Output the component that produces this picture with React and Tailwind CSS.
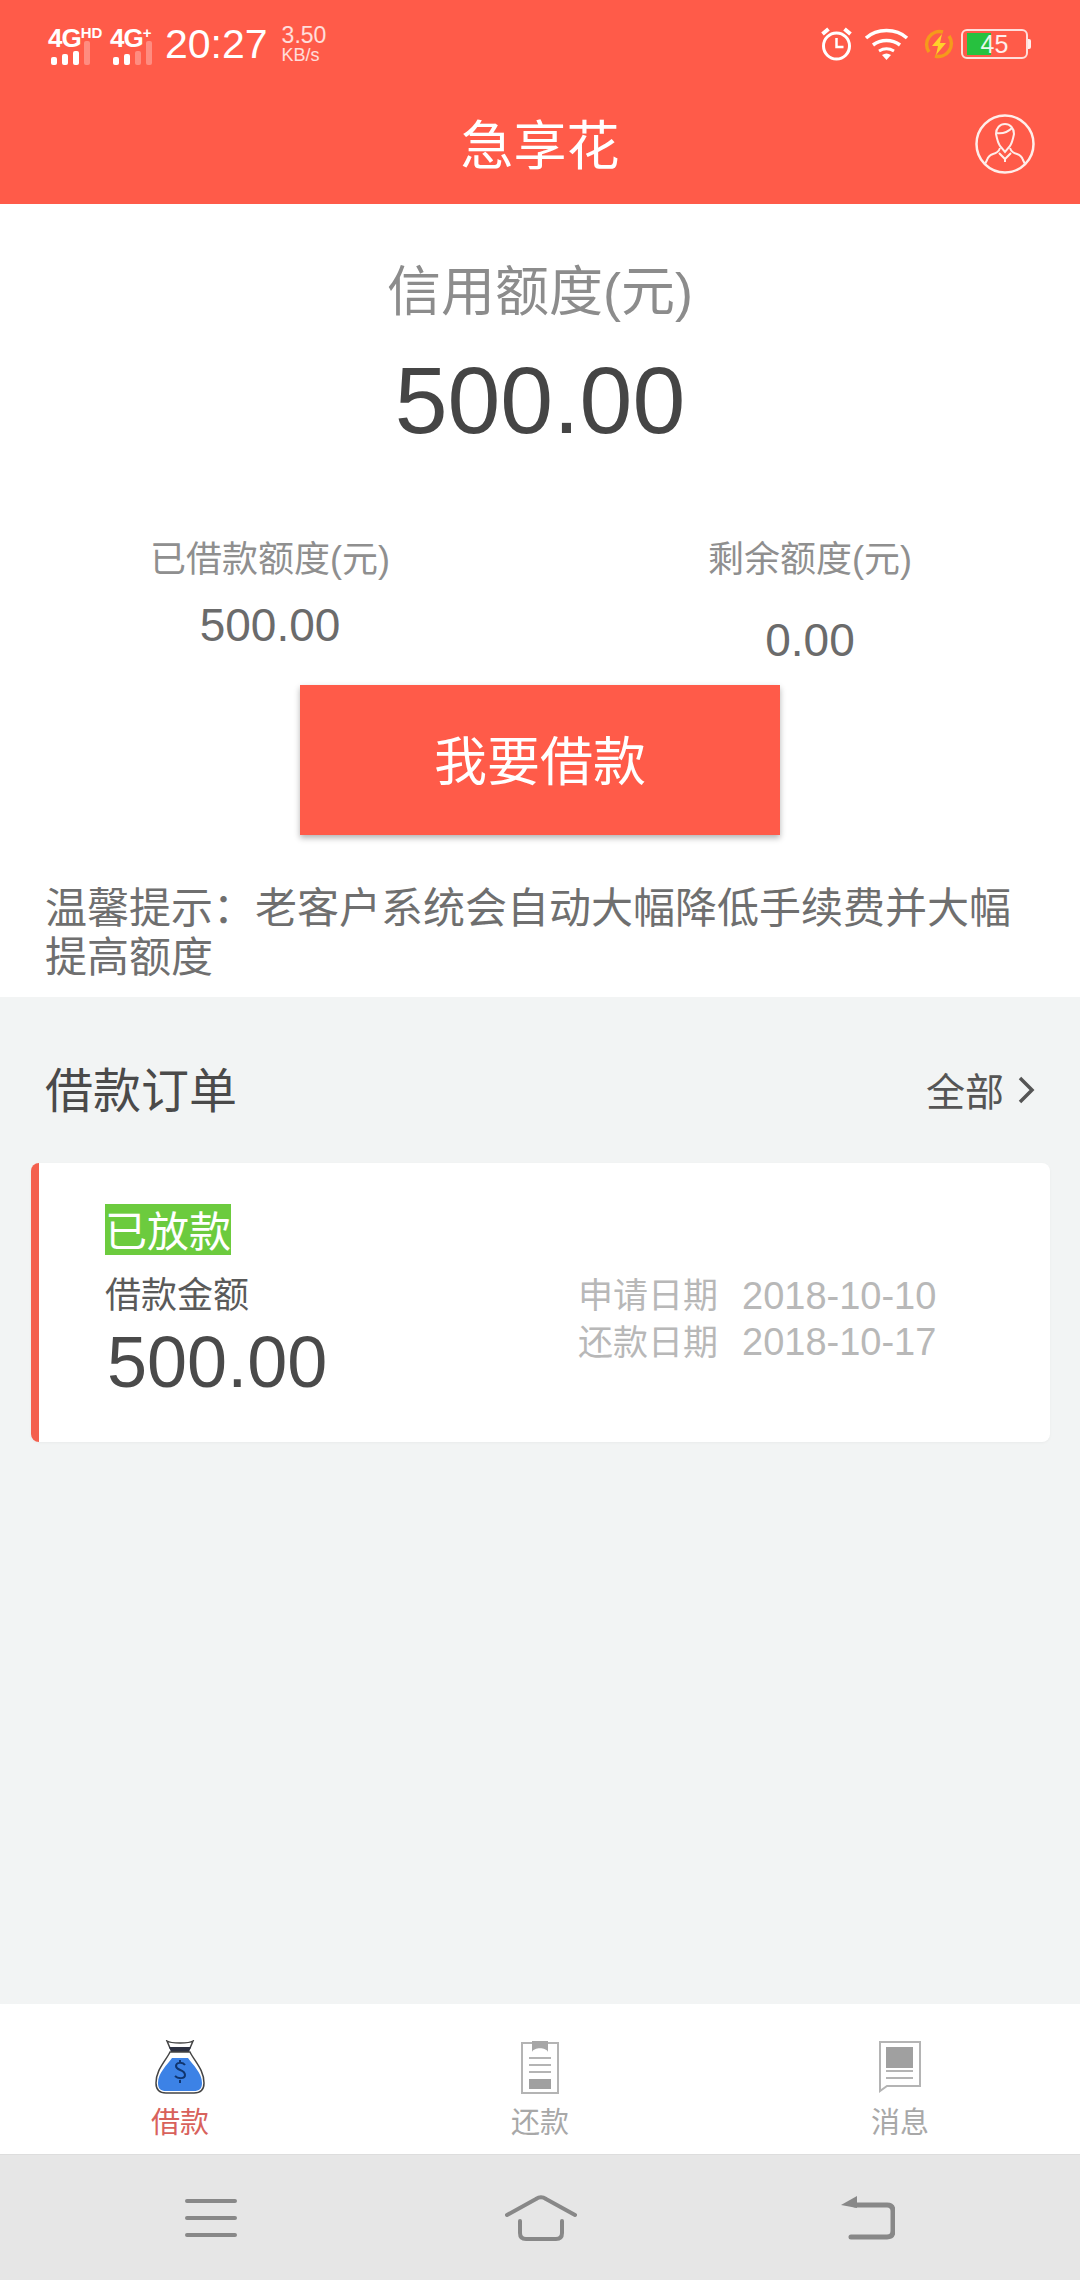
const fontStack = { fontFamily: '"Liberation Sans", "Noto Sans CJK SC", sans-serif' }

function SignalIcon({ label, sup, bars, dim }) {
  return (
    <div className="flex flex-col w-[50px] h-[36px]">
      <div className="flex items-start leading-none text-white font-bold">
        <span className="text-[26px] leading-[24px] tracking-[-1px]">{label}</span>
        <span className="text-[15px] leading-[14px] font-bold">{sup}</span>
      </div>
      <div className="flex items-end gap-[5px] h-[18px] mt-[-3px] ml-[3px]">
        {bars.map((h, i) => (
          <div
            key={i}
            className={`w-[6px] rounded-[2px] ${i >= dim ? 'bg-white/30' : 'bg-white'}`}
            style={{ height: h }}
          />
        ))}
      </div>
    </div>
  )
}

function StatusBar() {
  return (
    <div className="h-[88px] flex items-center pl-[48px] pr-[49px] text-white">
      <SignalIcon label="4G" sup="HD" bars={[8, 11, 14, 24]} dim={3} />
      <div className="ml-[12px]">
        <SignalIcon label="4G" sup="+" bars={[8, 11, 14, 24]} dim={2} />
      </div>
      <span className="ml-[5px] text-[41px] leading-none">20:27</span>
      <div className="ml-[14px] flex flex-col text-white/80">
        <span className="text-[23px] leading-[21px]">3.50</span>
        <span className="text-[18px] leading-[18px]">KB/s</span>
      </div>
      <div className="ml-auto flex items-center">
        <svg width="33" height="36" viewBox="0 0 32 36" fill="none" stroke="white" strokeWidth="3">
          <circle cx="16" cy="20" r="13" />
          <path d="M16 12v9h7" strokeWidth="2.5" />
          <path d="M2 8l6-5M30 8l-6-5" strokeWidth="4" />
        </svg>
        <svg className="ml-[11px]" width="45" height="33" viewBox="0 0 45 33" fill="none" stroke="white" strokeWidth="3.5">
          <path d="M2 10c11-10 30-10 41 0" />
          <path d="M9 17c8-6 19-6 27 0" />
          <path d="M15 23c5-3 10-3 15 0" strokeWidth="3" />
          <path d="M18 27l4.500 5 4.500-5c-3-2-6-2-9 0z" fill="white" stroke="none" />
        </svg>
        <svg className="ml-[14px]" width="32" height="30" viewBox="0 0 32 30" fill="none">
          <path d="M6 23A13 13 0 0 1 20 3" stroke="#f59a1b" strokeWidth="3.500" />
          <path d="M26 7A13 13 0 0 1 12 27" stroke="#f59a1b" strokeWidth="3.500" />
          <path d="M19 5L9 17h6l-2 9 10-12h-6z" fill="#ffd02a" />
        </svg>
        <div className="ml-[6px] flex items-center">
          <div className="w-[67px] h-[30px] rounded-[6px] border-2 border-white/80 flex items-center relative overflow-hidden">
            <div className="ml-[4px] w-[24px] h-[22px] bg-[#27c13f]" />
            <span className="absolute inset-0 flex items-center justify-center text-[25px] leading-none text-white/90">45</span>
          </div>
          <div className="w-[3px] h-[10px] bg-white/90 rounded-r-[2px]" />
        </div>
      </div>
    </div>
  )
}

function TitleBar() {
  return (
    <div className="h-[116px] relative flex items-center justify-center">
      <span className="text-[53px] leading-none text-white">急享花</span>
      <svg className="absolute right-[45px] top-[26px]" width="60" height="60" viewBox="0 0 60 60" fill="none" stroke="#ffeeea" strokeWidth="2">
        <circle cx="30" cy="30" r="28.500" strokeWidth="2.500" />
        <path d="M21 20c0-6 4-10 9-10s9 4 9 10c-1 5-2 9-4 12l-5 6-5-6c-2-3-3-7-4-12z" />
        <path d="M21 19c6 1 12-1 16-5" />
        <path d="M25 34c-1 3-3 5-7 6-3 1-5 3-6 6l-2 4" />
        <path d="M35 34c1 3 3 5 7 6 3 1 5 3 6 6l2 4" />
        <path d="M24 39l6 6 6-6M30 45v3" />
      </svg>
    </div>
  )
}

function MoneyBagIcon() {
  return (
    <svg width="50" height="54" viewBox="0 0 50 54" fill="none">
      <path d="M12 1c3 2 6 2 13 2s10 0 13-2l-3 7H15z" fill="#fff" stroke="#444" strokeWidth="1.500" />
      <path d="M14 7h22l-2 5H16z" fill="#2d3142" />
      <path d="M15 12C10 22 1 30 1 43c0 7 4 10 10 10h28c6 0 10-3 10-10 0-13-9-21-14-31z" fill="#fff" stroke="#444" strokeWidth="1.500" />
      <path d="M17 18h16c5 7 14 15 14 25 0 6-3 8-8 8H11c-5 0-8-2-8-8 0-10 9-18 14-25z" fill="#3c82e6" />
      <path d="M30 25c-2-3-9-3-9 1 0 5 9 3 9 9 0 4-7 4-10 1M25 20v3M25 40v3" stroke="#10356e" strokeWidth="2" />
    </svg>
  )
}

function RepayIcon() {
  return (
    <svg width="40" height="54" viewBox="0 0 40 54" fill="none" stroke="#b4b4b4">
      <path d="M12 3H2v50h36V3H28" strokeWidth="2" />
      <path d="M12 1h16v11c-2-5-14-5-16 0z" fill="#a6a6a6" stroke="none" />
      <path d="M9 18h22M9 25h22M9 32h22" strokeWidth="2" />
      <rect x="9" y="39" width="22" height="10" fill="#a0a0a0" stroke="none" />
    </svg>
  )
}

function MessageIcon() {
  return (
    <svg width="44" height="54" viewBox="0 0 44 54" fill="none" stroke="#b4b4b4" strokeWidth="2">
      <path d="M2 2h40v44H9l-7 5z" />
      <rect x="8" y="7" width="27" height="21" fill="#a0a0a0" stroke="none" />
      <path d="M8 31h27M8 38h27" />
    </svg>
  )
}

function NavTab({ icon, label, active }) {
  return (
    <div className="flex-1 flex flex-col items-center pt-[36px]">
      <div className="h-[54px] flex items-center justify-center">{icon}</div>
      <span className={`mt-[12px] text-[29px] leading-[34px] ${active ? 'text-[#d8625c]' : 'text-[#a8a8a8]'}`}>
        {label}
      </span>
    </div>
  )
}

function Stat({ label, value, gap }) {
  return (
    <div className="flex-1 flex flex-col items-center">
      <span className="text-[36px] leading-[40px] text-[#8f8f8f]">{label}</span>
      <span className={`text-[46px] leading-[50px] text-[#6b6b6b] ${gap}`}>{value}</span>
    </div>
  )
}

export default function App() {
  return (
    <div className="w-[1080px] h-[2280px] flex flex-col bg-[#f2f4f4] overflow-hidden" style={fontStack}>
      {/* Header */}
      <div className="h-[204px] bg-[#ff5b49] shrink-0">
        <StatusBar />
        <TitleBar />
      </div>

      {/* Credit summary */}
      <div className="bg-white h-[793px] shrink-0 flex flex-col items-center">
        <span className="mt-[58px] text-[54px] leading-[60px] text-[#8c8c8c]">信用额度(元)</span>
        <span className="mt-[28px] text-[95px] leading-[100px] text-[#454545]">500.00</span>
        <div className="mt-[90px] w-full flex">
          <Stat label="已借款额度(元)" value="500.00" gap="mt-[20px]" />
          <Stat label="剩余额度(元)" value="0.00" gap="mt-[35px]" />
        </div>
        <div className="mt-[20px] w-[480px] h-[150px] bg-[#ff5b49] flex items-center justify-center shadow-[0_3px_6px_rgba(0,0,0,0.3)]">
          <span className="text-[53px] leading-none text-white mt-[5px]">我要借款</span>
        </div>
        <p className="mt-[49px] w-full px-[45px] text-[42px] leading-[49px] text-[#6f6f6f]">
          温馨提示：老客户系统会自动大幅降低手续费并大幅提高额度
        </p>
      </div>

      {/* Orders */}
      <div className="flex-1 px-[31px]">
        <div className="mt-[65px] h-[60px] flex items-center justify-between pl-[14px] pr-[14px]">
          <span className="text-[48px] leading-none text-[#4a4a4a]">借款订单</span>
          <div className="flex items-center text-[#555555]">
            <span className="text-[39px] leading-none">全部</span>
            <svg className="ml-[13px] mt-[-4px]" width="18" height="28" viewBox="0 0 18 28" fill="none" stroke="currentColor" strokeWidth="3.500">
              <path d="M3 2l12 12L3 26" />
            </svg>
          </div>
        </div>
        <div className="mt-[41px] w-[1019px] h-[279px] bg-white rounded-[8px] border-l-[8px] border-[#f4604e] pl-[66px] pt-[41px] flex shadow-[0_1px_3px_rgba(0,0,0,0.04)]">
          <div className="w-[473px] flex flex-col items-start">
            <span className="w-[126px] h-[51px] bg-[#6ccb3e] text-white text-[42px] leading-[57px] overflow-hidden">已放款</span>
            <span className="mt-[21px] text-[36px] leading-[40px] text-[#5a5a5a]">借款金额</span>
            <span className="mt-[6px] ml-[2px] text-[72px] leading-[80px] text-[#4a4a4a]">500.00</span>
          </div>
          <div className="mt-[68px] flex flex-col text-[#b8b8b8]">
            <div className="flex items-center h-[47px]">
              <span className="text-[35px] leading-none w-[164px]">申请日期</span>
              <span className="text-[38px] leading-none">2018-10-10</span>
            </div>
            <div className="flex items-center h-[46px]">
              <span className="text-[35px] leading-none w-[164px]">还款日期</span>
              <span className="text-[38px] leading-none">2018-10-17</span>
            </div>
          </div>
        </div>
      </div>

      {/* Tab bar */}
      <div className="h-[150px] bg-white shrink-0 flex">
        <NavTab icon={<MoneyBagIcon />} label="借款" active />
        <NavTab icon={<RepayIcon />} label="还款" />
        <NavTab icon={<MessageIcon />} label="消息" />
      </div>

      {/* System nav */}
      <div className="h-[126px] bg-[#e6e6e6] shrink-0 border-t border-[#dddddd] flex items-center justify-between pl-[185px] pr-[185px]">
        <svg width="52" height="40" viewBox="0 0 52 40" fill="none" stroke="#888888" strokeWidth="4" strokeLinecap="round">
          <path d="M2 3h48M2 20h48M2 37h48" />
        </svg>
        <svg className="ml-[4px]" width="72" height="46" viewBox="0 0 72 46" fill="none" stroke="#888888" strokeWidth="4" strokeLinecap="round" strokeLinejoin="round">
          <path d="M2 20L31 4c3-2 7-2 10 0l29 16" />
          <path d="M15 26v12c0 4 2 6 6 6h30c4 0 6-2 6-6V26" />
        </svg>
        <svg width="54" height="44" viewBox="0 0 54 44" fill="none" stroke="#888888" strokeWidth="5">
          <path d="M14 9h32c4 0 6 2 6 6v20c0 4-2 6-6 6H10" strokeLinecap="round" />
          <path d="M0 9L16 0v12z" fill="#888888" stroke="none" />
        </svg>
      </div>
    </div>
  )
}
